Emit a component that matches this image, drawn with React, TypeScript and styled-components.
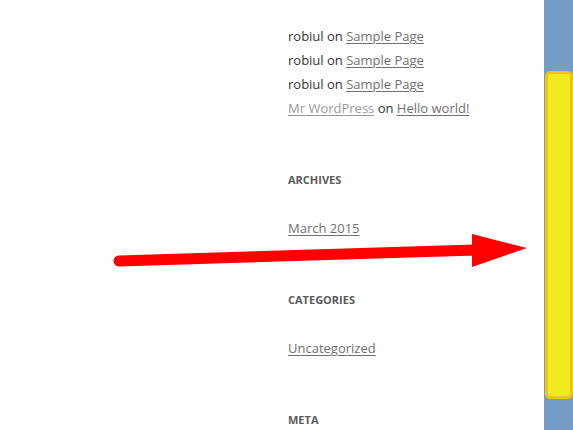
import React from "react";
import styled, { createGlobalStyle } from "styled-components";

const Global = createGlobalStyle`
  html, body { margin: 0; padding: 0; background: #ffffff; overflow: hidden; }
  body { font-family: "Open Sans", "Noto Sans", sans-serif; }
`;

const Page = styled.div`
  position: relative;
  display: flex;
  width: 573px;
  height: 430px;
  overflow: hidden;
`;

const Content = styled.div`
  flex: 1;
  padding: 24px 0 0 288px;
  display: flex;
  flex-direction: column;
  gap: 48px;
`;

const Widget = styled.section`
  display: flex;
  flex-direction: column;
  gap: 24px;
`;

const WidgetTitle = styled.h2`
  margin: 0;
  font-size: 11px;
  line-height: 24px;
  font-weight: 700;
  letter-spacing: 0;
  text-transform: uppercase;
  color: #5a5a5a;
`;

const List = styled.ul`
  margin: 0;
  padding: 0;
  list-style: none;
`;

const Item = styled.li`
  font-size: 13px;
  line-height: 24px;
  color: #333333;
  white-space: nowrap;
`;

const Link = styled.a<{ $muted?: boolean }>`
  color: ${(p) => (p.$muted ? "#9a9a9a" : "#6f6f6f")};
  text-decoration: underline;
  text-underline-offset: 2px;
  text-decoration-thickness: 1px;
`;

const Track = styled.div`
  width: 29px;
  flex: none;
  background: #749cc4;
  padding-top: 71px;
  box-sizing: border-box;
`;

const Thumb = styled.div`
  margin-left: 1px;
  height: 328px;
  box-sizing: border-box;
  background: #f0ea1f;
  border: 3px solid #f1c413;
  border-radius: 5px;
`;

const Arrow = styled.svg`
  position: absolute;
  left: 0;
  top: 0;
  pointer-events: none;
`;

const comments = [
  { author: "robiul", post: "Sample Page" },
  { author: "robiul", post: "Sample Page" },
  { author: "robiul", post: "Sample Page" },
];

export default function App() {
  return (
    <>
      <Global />
      <Page>
        <Content>
          <Widget>
            <List>
              {comments.map((c, i) => (
                <Item key={i}>
                  {c.author} on <Link href="#">{c.post}</Link>
                </Item>
              ))}
              <Item>
                <Link href="#" $muted>Mr WordPress</Link> on <Link href="#">Hello world!</Link>
              </Item>
            </List>
          </Widget>
          <Widget>
            <WidgetTitle>Archives</WidgetTitle>
            <List>
              <Item><Link href="#">March 2015</Link></Item>
            </List>
          </Widget>
          <Widget>
            <WidgetTitle>Categories</WidgetTitle>
            <List>
              <Item><Link href="#">Uncategorized</Link></Item>
            </List>
          </Widget>
          <Widget>
            <WidgetTitle>Meta</WidgetTitle>
          </Widget>
        </Content>
        <Track>
          <Thumb />
        </Track>
        <Arrow width="573" height="430" viewBox="0 0 573 430">
          <line x1="119" y1="261" x2="476" y2="250" stroke="#ff0000" strokeWidth="11" strokeLinecap="round" />
          <polygon points="472,234 527,248 472,267" fill="#ff0000" />
        </Arrow>
      </Page>
    </>
  );
}
